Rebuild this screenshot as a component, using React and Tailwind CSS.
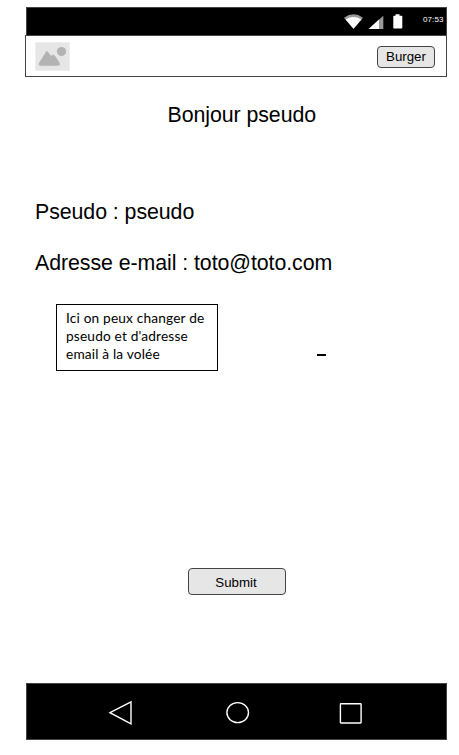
const sans = "font-['Liberation_Sans',Arial,sans-serif]";

function StatusBar() {
  return (
    <div className="ml-px flex h-[28px] items-start border border-b-0 border-[#444] bg-black">
      <svg className="ml-[316px] mt-[6px] h-[16px] w-[60px]" viewBox="343 14 60 16">
        <path d="M344 17.7Q353.500 11 363 17.700L353.500 28.700Z" fill="#999" />
        <path d="M345.600 19.500Q353.500 14.700 361.400 19.500L353.500 28.700Z" fill="#fff" />
        <path d="M383.300 15.700V29H368.700Z" fill="#999" />
        <path d="M379 19.600V29H368.700Z" fill="#fff" />
        <path d="M395.500 14.300h4v1.400h2q.8 0 .8.800v11.200q0 .8-.8.800h-7.400q-.8 0-.8-.8v-11.200q0-.8.800-.8h1.400z" fill="#fff" />
      </svg>
      <span className="ml-[20px] mt-[6px] text-[8px] leading-[12px] tracking-[0.1px] text-white">07:53</span>
    </div>
  );
}

function Header() {
  return (
    <div className="flex h-[42px] items-start justify-between border border-[#444] bg-white pl-[9px] pr-[11px]">
      <svg className="mt-[6px] h-[30px] w-[35px]" viewBox="0 0 35 30">
        <rect x="0.500" y="0.500" width="34" height="28" fill="#e6e6e6" stroke="#eee" />
        <circle cx="26.500" cy="9.500" r="4.600" fill="#b3b3b3" />
        <path d="M4 21L10.500 10.500Q12 8 13.500 10.500L16 14Q18.500 11.500 20.500 14.500L24.700 21Q25.500 23.700 23 23.700H5.500Q3 23.700 4 21Z" fill="#b3b3b3" />
      </svg>
      <button className="mt-[10px] h-[22px] w-[58px] rounded-[4px] border border-[#444] bg-[#e6e6e6] text-[13.300px] leading-[20px] text-black">
        Burger
      </button>
    </div>
  );
}

function NavBar() {
  return (
    <div className="ml-px flex h-[57px] items-center border border-[#444] bg-black">
      <svg className="h-[55px] w-[419px]" viewBox="27 684 419 55" fill="none" stroke="#fff" strokeWidth="1.4">
        <path d="M110 712.700L131 701.800V723.800Z" />
        <ellipse cx="237.700" cy="712.600" rx="10.800" ry="10" />
        <rect x="340.400" y="703.700" width="20.700" height="19.300" rx="0.700" />
      </svg>
    </div>
  );
}

export default function App() {
  return (
    <div className={`h-[755px] w-[459px] overflow-hidden bg-white text-black ${sans}`}>
      <div className="ml-[25px] flex h-[740px] w-[422px] flex-col pt-[7px]">
        <StatusBar />
        <Header />
        <main className="flex flex-1 flex-col text-[21.330px] leading-[24px] tracking-[-0.06px]">
          <h1 className="ml-[142.500px] mt-[26px]">Bonjour pseudo</h1>
          <p className="ml-[10px] mt-[73px]">Pseudo : pseudo</p>
          <p className="ml-[10px] mt-[27px]">Adresse e-mail : toto@toto.com</p>
          <div className="ml-[31px] mt-[29px] flex">
            <div className="h-[67px] w-[162px] whitespace-nowrap border border-black pl-[9px] pt-[4px] font-[Lato,sans-serif] text-[13.700px] leading-[18px] tracking-[0.170px]">
              Ici on peux changer de
              <br />
              pseudo et d'adresse
              <br />
              email à la volée
            </div>
            <div className="ml-[99px] mt-[50px] h-[2px] w-[9px] bg-black" />
          </div>
          <button className="ml-[163px] mt-[197px] h-[27px] w-[98px] rounded-[4px] border border-[#444] bg-[#e6e6e6] pr-[2px] pt-[1px] text-[13.300px] leading-[26px] tracking-normal">
            Submit
          </button>
        </main>
        <NavBar />
      </div>
    </div>
  );
}
